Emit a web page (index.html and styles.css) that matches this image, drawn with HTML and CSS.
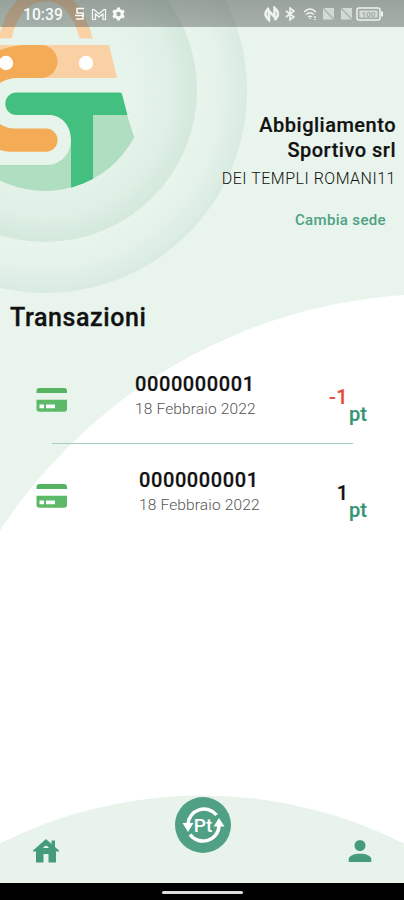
FILE: index.html
```html
<!DOCTYPE html>
<html lang="it">
<head>
<meta charset="utf-8">
<title>Transazioni</title>
<link rel="stylesheet" href="styles.css">
</head>
<body>
<div class="screen">
  <svg class="backdrop" width="404" height="900" viewBox="0 0 404 900" aria-hidden="true">
    <defs>
      <radialGradient id="outer" gradientUnits="userSpaceOnUse" cx="45" cy="91" r="202">
        <stop offset=".74" stop-color="#e8f4ec"/><stop offset=".87" stop-color="#e4f2e9"/><stop offset="1" stop-color="#d9ebe1"/>
      </radialGradient>
      <radialGradient id="inner" gradientUnits="userSpaceOnUse" cx="45" cy="90" r="152">
        <stop offset=".55" stop-color="#e7f4ec"/><stop offset=".82" stop-color="#e0f0e6"/><stop offset="1" stop-color="#d4e8dc"/>
      </radialGradient>
      <clipPath id="disc"><circle cx="45" cy="90" r="101"/></clipPath>
      <clipPath id="grip"><rect width="120" height="38.500"/></clipPath>
    </defs>
    <circle cx="438" cy="818" r="524" fill="#fff"/>
    <circle cx="45" cy="91" r="202" fill="url(#outer)"/>
    <circle cx="45" cy="90" r="152" fill="url(#inner)"/>
    <path clip-path="url(#grip)" d="M4 45C9 12 25-5 46-5S80 12 88 45" fill="none" stroke="#fad1a5" stroke-width="12.500"/>
    <path d="M0 45H109L117 78H0Z" fill="#fad1a5"/>
    <path d="M0 50Q14 45 28 45H41A16.500 16.500 0 0 1 41 78H18Q8 78 0 83Z" fill="#f3ab55"/>
    <circle cx="6" cy="63" r="7.200" fill="#fff"/><circle cx="86" cy="63" r="7.200" fill="#fff"/>
    <g clip-path="url(#disc)">
      <path d="M93 115H127L134.500 138L120 200H0V165H48C62 164 71 153 71 139Z" fill="#b0dec0"/>
      <path d="M16.500 92.500H120Q121.500 92.500 122 94L127.500 115H93V200H71V140C71 125 61 115 49 115H16.500A11.250 11.250 0 0 1 16.500 92.500Z" fill="#43bf7f"/>
    </g>
    <path d="M0 124Q7 128.500 15 128.500H46A11.600 11.600 0 0 1 46 151.700H10Q5 151.500 0 150Z" fill="#f3ab55"/>
    <circle cx="202" cy="1244.500" r="449" fill="#e8f3eb"/>
  </svg>

  <header class="status">
    <span class="clock">10:39</span>
    <svg class="notices" width="52" height="16" viewBox="0 0 52 16" fill="none" stroke="#f7faf8" stroke-width="1.600">
      <path d="M10 2.500H3V7H9V13H2M1 9.500H10"/>
      <path d="M18.500 13.500V3.500H20L25 8L30 3.500H31.500V13.500H29V8L25 11L21.500 8V13.500Z" stroke-width="1.200"/>
      <circle cx="44.500" cy="8" r="3.700" stroke-width="3"/>
      <path d="M44.500 1.500V4M44.500 12V14.500M39 4.800L41 6M48 10L50 11.200M39 11.200L41 10M48 6L50 4.800" stroke-width="3"/>
    </svg>
    <svg class="signals" width="120" height="16" viewBox="0 0 120 16" fill="none" stroke="#eff4f1" stroke-width="1.500">
      <path d="M5 2Q-2 8 5 14V5L10.500 11V2Q17.500 8 10.500 14" stroke-width="2.500"/>
      <path d="M22 5L30 11L26 14V2L30 5L22 11" stroke-width="1.600"/>
      <path d="M40 6Q46 0 52 6M42 8.500Q46 5 50 8.500M44 11Q46 9.500 48 11" stroke-width="1.400"/>
      <path d="M46 12V13M51 10V12M51 13V14"/>
      <g stroke="none"><path d="M59 2H70V13.500H59Z M77 2H88V13.500H77Z" fill="#d2dad5"/></g>
      <path d="M59 2L70 13.500M77 2L88 13.500" stroke="#a9b6ae"/>
      <rect x="93" y="2" width="23" height="12" rx="2"/><path d="M118 5.500V10.500" stroke-width="2"/>
      <rect x="95.500" y="4.500" width="18" height="7" fill="#d5ddd8" stroke="none"/>
      <text x="104.500" y="11.300" class="charge">100</text>
    </svg>
  </header>

  <section class="store">
    <h1 class="store-name">Abbigliamento<br>Sportivo srl</h1>
    <p class="address">DEI TEMPLI ROMANI11</p>
    <a class="change">Cambia sede</a>
  </section>

  <main class="content">
    <h2 class="title">Transazioni</h2>
    <article class="row">
      <svg class="card" width="32" height="26" viewBox="0 0 32 26"><path d="M0.500 6V4Q.5 1 3.500 1H28Q31 1 31 4V6Z" fill="#56b361"/><path d="M.5 12.800H31V22Q31 24.800 28 24.800H3.500Q.5 24.800 .5 22Z" fill="#5cb967"/><path d="M3.500 17.500H8V21.200H3.500ZM10 17.500H19V21.200H10Z" fill="#fff"/></svg>
      <div class="detail"><div class="code">0000000001</div><div class="date">18 Febbraio 2022</div></div>
      <div class="points"><span class="amount minus">-1</span><span class="unit">pt</span></div>
    </article>
    <div class="rule"></div>
    <article class="row second">
      <svg class="card" width="32" height="26" viewBox="0 0 32 26"><path d="M0.500 6V4Q.5 1 3.500 1H28Q31 1 31 4V6Z" fill="#56b361"/><path d="M.5 12.800H31V22Q31 24.800 28 24.800H3.500Q.5 24.800 .5 22Z" fill="#5cb967"/><path d="M3.500 17.500H8V21.200H3.500ZM10 17.500H19V21.200H10Z" fill="#fff"/></svg>
      <div class="detail"><div class="code">0000000001</div><div class="date">18 Febbraio 2022</div></div>
      <div class="points"><span class="amount">1</span><span class="unit">pt</span></div>
    </article>
  </main>

  <nav class="tabs">
    <svg class="home" width="28" height="26" viewBox="0 0 28 26"><path fill="#459c7a" fill-rule="evenodd" d="M14 1L19.500 6V2.500H23V9L27 12.500V13.500H24V24.500H16.500V16H11.500V24.500H4V13.500H1V12.500ZM11 10H17Q14 5.500 11 10Z"/></svg>
    <svg class="exchange" width="58" height="58" viewBox="0 0 58 58">
      <circle cx="29" cy="29" r="28" fill="#4fa085"/>
      <path d="M42.500 19A16 15.700 0 0 0 14 28M16 38.500A16 15.700 0 0 0 45 30" fill="none" stroke="#fff" stroke-width="3.500"/>
      <path d="M8.500 27H19.500L14 36ZM39.500 30.500H50.500L45 22Z" fill="#fff"/>
      <text x="29" y="36" class="pt">Pt</text>
    </svg>
    <svg class="person" width="24" height="24" viewBox="0 0 24 24" fill="#459c7a"><circle cx="12" cy="6.500" r="5.500"/><path d="M.7 23V20.500C.7 16.500 6 14.700 12 14.700S23.300 16.500 23.300 20.500V23Z"/></svg>
  </nav>
  <footer class="gesture"><span class="handle"></span></footer>
</div>
</body>
</html>
```
FILE: styles.css
```css
* { box-sizing: border-box; }
body { margin: 0; font-family: Roboto, sans-serif; color: #111; }
.screen {
  position: relative;
  isolation: isolate;
  display: flex;
  flex-direction: column;
  width: 404px;
  height: 900px;
  overflow: hidden;
  background: linear-gradient(#e8f4ec 0 535px, #fff 535px);
}
.backdrop { position: absolute; inset: 0; z-index: -1; }
.status {
  display: flex;
  align-items: center;
  height: 27px;
  padding: 1px 20px 0 23px;
  background: linear-gradient(rgba(75, 82, 78, .5), rgba(75, 82, 78, .42));
  color: #f7faf8;
}
.clock { width: 51px; font-size: 15.700px; font-weight: 500; }
.signals { margin-left: auto; }
.charge { font-size: 8px; font-weight: 700; text-anchor: middle; fill: #a1aea6; stroke: none; }
.store { height: 273px; padding: 86px 8px 0 0; text-align: right; }
.store-name { margin: 0; font-size: 20px; line-height: 24.500px; font-weight: 500; letter-spacing: .5px; -webkit-text-stroke: .2px; }
.address { margin: 7px 0 0; font-size: 16px; line-height: 20px; font-weight: 300; letter-spacing: .5px; }
.change { display: block; margin: 21px 10px 0 0; font-size: 15px; line-height: 20px; font-weight: 500; letter-spacing: .35px; color: #4ea183; }
.content { flex: 1; }
.title { margin: 0; padding-left: 10px; height: 70px; font-size: 25px; line-height: 36px; font-weight: 500; letter-spacing: .6px; -webkit-text-stroke: .3px; }
.row { display: flex; height: 73px; padding-left: 36px; }
.card { margin-top: 17px; }
.detail { width: 194px; padding-left: 67px; white-space: nowrap; }
.code { margin-top: 2px; font-size: 20px; line-height: 24px; font-weight: 500; letter-spacing: .6px; -webkit-text-stroke: .2px; }
.date { font-size: 15.500px; line-height: 27px; font-weight: 300; letter-spacing: .15px; color: #555; }
.points { display: flex; justify-content: flex-end; width: 105px; padding-top: 14px; font-size: 20px; line-height: 26px; font-weight: 500; -webkit-text-stroke: .2px; }
.minus { letter-spacing: .5px; color: #e64a3b; }
.unit { margin: 17px 0 0 1px; color: #359576; }
.rule { width: 301px; height: 1px; margin-left: 52px; background: #a3cfc0; }
.second { margin-top: 22px; }
.second .detail { padding-left: 71px; }
.tabs { display: flex; height: 86px; padding: 0 32px; justify-content: space-between; align-items: flex-start; }
.home { margin-top: 41px; }
.exchange { margin: -1px 3px 0 0; }
.person { margin-top: 42px; }
.pt { font-size: 19px; font-weight: 500; text-anchor: middle; fill: #fff; }
.gesture { display: flex; justify-content: center; height: 17px; padding-top: 8px; background: #000; }
.handle { width: 81px; height: 3px; border-radius: 2px; background: #ddd; }
```
